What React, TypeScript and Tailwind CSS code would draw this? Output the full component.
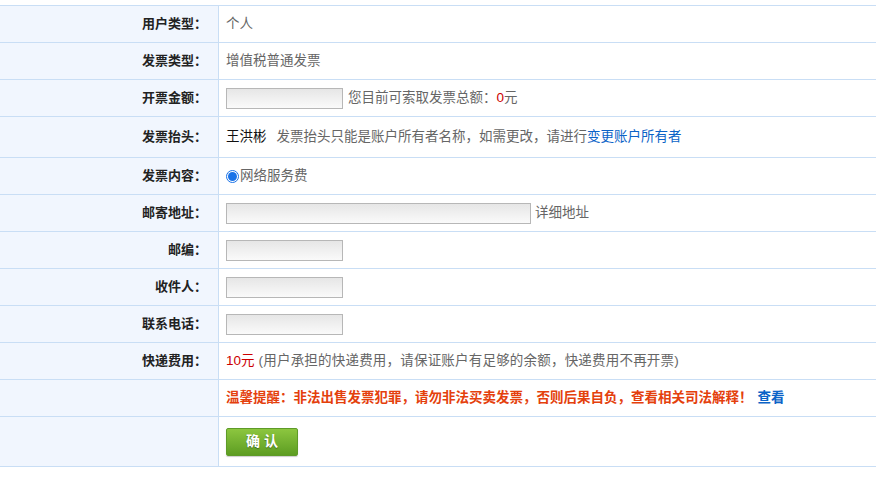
import React from "react";

const FONT = { fontFamily: '"Liberation Sans", "Noto Sans CJK SC", sans-serif' };

function Row({
  label,
  height = "h-[37px]",
  children,
}: {
  label?: string;
  height?: string;
  children: React.ReactNode;
}) {
  return (
    <div className={`flex border-t border-[#c9def5] ${height}`}>
      <div className="w-[219px] shrink-0 bg-[#f1f6fe] border-r border-[#c9def5] flex items-center justify-end pr-[11px] text-[13px] font-bold text-[#222]">
        {label}
      </div>
      <div className="flex-1 flex items-center pl-[7px] text-[13.5px] text-[#666]">
        {children}
      </div>
    </div>
  );
}

function Field({ wide = false }: { wide?: boolean }) {
  return (
    <input
      className={`h-[21px] border border-[#b7b7b7] bg-gradient-to-b from-[#e6e6e6] to-[#fafafa] outline-none ${
        wide ? "w-[305px]" : "w-[117px]"
      }`}
    />
  );
}

export default function App() {
  return (
    <div className="bg-white pt-[5px] w-[876px]" style={FONT}>
      <div className="border-b border-[#c9def5]">
        <Row label="用户类型：">个人</Row>
        <Row label="发票类型：">增值税普通发票</Row>
        <Row label="开票金额：">
          <Field />
          <span className="ml-[5px]">
            您目前可索取发票总额：<span className="text-[#c00]">0</span>元
          </span>
        </Row>
        <Row label="发票抬头：" height="h-[41px]">
          <span className="text-[#111]">王洪彬</span>
          <span className="ml-[10px]">
            发票抬头只能是账户所有者名称，如需更改，请进行
            <span className="text-[#0b63c7]">变更账户所有者</span>
          </span>
        </Row>
        <Row label="发票内容：">
          <label className="flex items-center">
            <span className="w-[13px] h-[13px] rounded-full border border-[#1a73e8] flex items-center justify-center mr-px">
              <span className="w-[9px] h-[9px] rounded-full bg-[#1a73e8]" />
            </span>
            网络服务费
          </label>
        </Row>
        <Row label="邮寄地址：">
          <Field wide />
          <span className="ml-[4px]">详细地址</span>
        </Row>
        <Row label="邮编：">
          <Field />
        </Row>
        <Row label="收件人：">
          <Field />
        </Row>
        <Row label="联系电话：">
          <Field />
        </Row>
        <Row label="快递费用：">
          <span className="text-[#c00]">10元</span>
          <span className="ml-[4px] tracking-[0.2px]">
            (用户承担的快递费用，请保证账户有足够的余额，快递费用不再开票)
          </span>
        </Row>
        <Row>
          <span className="font-bold text-[#e4400c]">
            温馨提醒：非法出售发票犯罪，请勿非法买卖发票，否则后果自负，查看相关司法解释！
          </span>
          <span className="ml-[5px] font-bold text-[#0b63c7]">查看</span>
        </Row>
        <Row height="h-[50px]">
          <button className="w-[72px] h-[28px] rounded-[2px] border border-[#5e9b28] bg-gradient-to-b from-[#8cc63f] to-[#5d9d22] text-white font-bold text-[14px] [text-shadow:0_1px_1px_rgba(0,0,0,0.35)] shadow-[0_1px_1px_rgba(0,0,0,0.2)]">
            确 认
          </button>
        </Row>
      </div>
    </div>
  );
}
